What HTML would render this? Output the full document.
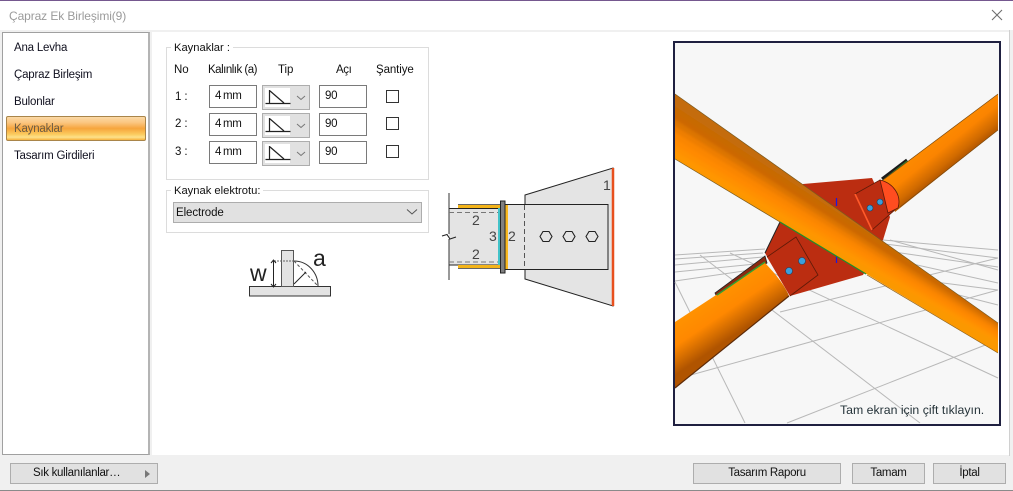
<!DOCTYPE html>
<html><head><meta charset="utf-8">
<style>
html,body{margin:0;padding:0;width:1013px;height:491px;overflow:hidden;background:#f0f0f0;font-family:"Liberation Sans",sans-serif;font-size:11.5px;color:#111}
div,span{position:absolute;box-sizing:border-box}
.t{white-space:nowrap;line-height:14px;letter-spacing:-.1px}
.box{background:#fff;border:1px solid #7a7a7a;height:23px;width:48px;padding:4px 0 0 5px;line-height:13px;font-size:11.5px;word-spacing:-1px;letter-spacing:-.3px}
.combo{background:#e1e1e1;border:1px solid #adadad;width:48px;height:25px}
.chk{width:13px;height:13px;background:#fff;border:1px solid #333}
.btn{background:#e1e1e1;border:1px solid #adadad;height:21px;text-align:center;line-height:19px;font-size:11.5px;letter-spacing:-.3px;color:#111}
.grp{border:1px solid #dcdcdc}
.leg{background:#fff;padding:0 3px;line-height:14px;white-space:nowrap;font-size:11.2px}
.li{left:14px;font-size:11.5px;line-height:14px;white-space:nowrap;color:#10101f;letter-spacing:-.2px}
</style></head><body>
<div style="left:0;top:0;width:1013px;height:30px;background:#fff"></div>
<div style="left:0;top:0;width:1013px;height:1px;background:#75588f"></div>
<div class="t" style="left:9px;top:9px;color:#9b9b9b;font-size:12px">Çapraz Ek Birleşimi(9)</div>
<svg style="position:absolute;left:990px;top:8px" width="14" height="14"><path d="M2 2L12 12M12 2L2 12" stroke="#6f6f6f" stroke-width="1.1" fill="none"/></svg>

<div style="left:152px;top:32px;width:857px;height:423px;background:#fff"></div>
<div style="left:1009px;top:30px;width:1px;height:426px;background:#d0d0d0"></div>
<div style="left:2px;top:32px;width:148px;height:423px;background:#fff;border:1px solid #a0a0a0;border-right:2px solid #b4b4b4"></div>

<div class="li" style="top:41px">Ana Levha</div>
<div class="li" style="top:68px">Çapraz Birleşim</div>
<div class="li" style="top:95px">Bulonlar</div>
<div style="left:6px;top:116px;width:140px;height:25px;border:1px solid #a9854a;border-radius:2px;background:linear-gradient(#fbd9a6 0%,#fbc57f 25%,#f6a53d 50%,#fbcb5e 75%,#fde18a 88%,#f7b13c 100%)"></div>
<div class="li" style="top:122px;color:#6b5a42">Kaynaklar</div>
<div class="li" style="top:149px">Tasarım Girdileri</div>

<div class="grp" style="left:166px;top:47px;width:263px;height:133px"></div>
<div class="leg" style="left:171px;top:41px">Kaynaklar :</div>
<div class="t" style="left:174px;top:63px">No</div>
<div class="t" style="left:208px;top:63px;letter-spacing:-.5px">Kalınlık (a)</div>
<div class="t" style="left:278px;top:63px">Tip</div>
<div class="t" style="left:336px;top:63px;letter-spacing:-.4px">Açı</div>
<div class="t" style="left:376px;top:63px">Şantiye</div>

<div class="t" style="left:175px;top:90px">1 :</div>
<div class="t" style="left:175px;top:117px">2 :</div>
<div class="t" style="left:175px;top:145px">3 :</div>

<div class="box" style="left:209px;top:85px">4 mm</div>
<div class="box" style="left:209px;top:113px">4 mm</div>
<div class="box" style="left:209px;top:141px">4 mm</div>

<div class="combo" style="left:262px;top:85px"></div>
<div class="combo" style="left:262px;top:113px"></div>
<div class="combo" style="left:262px;top:141px"></div>
<svg style="position:absolute;left:262px;top:85px" width="48" height="82">
<g><rect x="3" y="3" width="25" height="19" fill="#fff"/><path d="M3.500 18.500H28.500M7.500 5V18M7.500 5.500L22 18" stroke="#222" stroke-width="1.2" fill="none"/><path d="M35 11l4 3.500l4-3.500" stroke="#777" fill="none"/></g>
<g transform="translate(0,28)"><rect x="3" y="3" width="25" height="19" fill="#fff"/><path d="M3.500 18.500H28.500M7.500 5V18M7.500 5.500L22 18" stroke="#222" stroke-width="1.2" fill="none"/><path d="M35 11l4 3.500l4-3.500" stroke="#777" fill="none"/></g>
<g transform="translate(0,56)"><rect x="3" y="3" width="25" height="19" fill="#fff"/><path d="M3.500 18.500H28.500M7.500 5V18M7.500 5.500L22 18" stroke="#222" stroke-width="1.2" fill="none"/><path d="M35 11l4 3.500l4-3.500" stroke="#777" fill="none"/></g>
</svg>

<div class="box" style="left:319px;top:85px">90</div>
<div class="box" style="left:319px;top:113px">90</div>
<div class="box" style="left:319px;top:141px">90</div>
<div class="chk" style="left:386px;top:90px"></div>
<div class="chk" style="left:386px;top:117px"></div>
<div class="chk" style="left:386px;top:145px"></div>

<div class="grp" style="left:166px;top:190px;width:263px;height:43px"></div>
<div class="leg" style="left:171px;top:184px">Kaynak elektrotu:</div>
<div style="left:173px;top:202px;width:249px;height:21px;background:#e1e1e1;border:1px solid #adadad"></div>
<div class="t" style="left:176px;top:206px;font-size:11.5px">Electrode</div>
<svg style="position:absolute;left:405px;top:207px" width="14" height="10"><path d="M2 2.500l5 4.500l5-4.500" stroke="#555" fill="none"/></svg>

<svg style="position:absolute;left:240px;top:240px" width="100" height="60">
<rect x="9.500" y="46.500" width="81" height="9.500" fill="#e3e3e3" stroke="#333"/>
<rect x="41.500" y="10.500" width="12" height="36" fill="#e3e3e3" stroke="#555"/>
<path d="M54 21C68 21 78 33 78 46" fill="none" stroke="#333"/>
<path d="M54 21L78 46" fill="none" stroke="#555" stroke-dasharray="3 2"/>
<path d="M34 21H54" stroke="#666" stroke-dasharray="2 1" fill="none"/>
<path d="M33.500 21V46" stroke="#222"/>
<path d="M54 44L66 32" stroke="#222"/>
<path d="M31 23l2.500-3l2.500 3M31 44l2.500 3l2.500-3" stroke="#222" fill="none"/>
<text x="10" y="41" font-family="Liberation Sans,sans-serif" font-size="23" fill="#222">w</text>
<text x="73" y="26" font-family="Liberation Sans,sans-serif" font-size="23" fill="#222">a</text>
</svg>

<svg style="position:absolute;left:435px;top:155px" width="190" height="165" font-family="Liberation Sans,sans-serif" font-size="14" fill="#444">
<path d="M90 40L178 13V151L90 124Z" fill="#e4e4e4" stroke="#222" stroke-width="1"/>
<rect x="71" y="49.500" width="102" height="65" fill="#e4e4e4" stroke="#222"/>
<rect x="14" y="53" width="51" height="57" fill="#e4e4e4"/>
<path d="M14 53.500H65M14 110H65" stroke="#222"/>
<path d="M14 38V79M14 84V125" fill="none" stroke="#333"/>
<path d="M7 81L12 79.500L15 84L21 82" fill="none" stroke="#222" stroke-width="1.100"/>
<rect x="23" y="49.500" width="42" height="3.500" fill="#f4b41a"/><rect x="23" y="110" width="42" height="3.500" fill="#f4b41a"/>
<path d="M23 49.500H65M23 113.500H65" stroke="#666"/>
<path d="M14 57.500H63M14 107H63" stroke="#777" stroke-dasharray="5 3" fill="none"/>
<rect x="63" y="53" width="2.500" height="57" fill="#42c2c8"/>
<rect x="65.500" y="46" width="4.500" height="72" fill="#808080" stroke="#222"/>
<rect x="70.500" y="50" width="2.500" height="64" fill="#f8b820"/>
<path d="M89.500 50V114" stroke="#555" stroke-dasharray="5 3"/>
<path d="M178 13V151" stroke="#e8501e" stroke-width="2.500"/>
<g fill="none" stroke="#222" stroke-width="1.100">
<path d="M105 81.500l3-5h6l3 5l-3 5h-6z"/><path d="M128 81.500l3-5h6l3 5l-3 5h-6z"/><path d="M151 81.500l3-5h6l3 5l-3 5h-6z"/>
</g>
<text x="168" y="35">1</text><text x="37" y="70">2</text><text x="37" y="104">2</text><text x="54" y="86">3</text><text x="73" y="86">2</text>
</svg>

<svg style="position:absolute;left:673px;top:41px" width="328" height="385" viewBox="673 41 328 385">
<defs>
<linearGradient id="g1" gradientUnits="userSpaceOnUse" x1="930" y1="130" x2="958" y2="165"><stop offset="0" stop-color="#ff8f00"/><stop offset=".5" stop-color="#fb8400"/><stop offset=".8" stop-color="#d06a00"/><stop offset="1" stop-color="#a85000"/></linearGradient>
<linearGradient id="g2" gradientUnits="userSpaceOnUse" x1="715" y1="290" x2="742" y2="330"><stop offset="0" stop-color="#ff9400"/><stop offset=".5" stop-color="#ff8800"/><stop offset=".8" stop-color="#d06a00"/><stop offset="1" stop-color="#b05400"/></linearGradient>
<clipPath id="c1"><path d="M675 94L998 323V353L675 159Z"/></clipPath>
<filter id="b1" x="-5%" y="-5%" width="110%" height="110%"><feGaussianBlur stdDeviation="1.200"/></filter>
</defs>
<rect x="674" y="42" width="326" height="383" fill="#f7f7f7" stroke="#1f2040" stroke-width="2"/>
<g stroke="#b8b8b8" stroke-width="1" fill="none">
<path d="M675 255L765 249M675 259L763 253M675 265L763 257M675 272L765 263M675 281L765 268"/>
<path d="M883 240L998 250M885 244L998 258M880 250L998 267M872 255L998 283M880 275L998 290"/>
<path d="M675 282L745 423"/>
<path d="M700 255L920 423"/>
<path d="M730 253L998 378"/>
<path d="M787 423L998 340"/>
<path d="M680 378L998 290"/>
<path d="M780 312L998 258"/>
<path d="M860 270L998 305"/>
<path d="M890 240L998 270"/>
</g>
<path d="M803 184L872 178L890 217L883 240L863 275L790 296L765 253L780 222Z" fill="#bb2d11"/>
<path d="M780 222L765 253" stroke="#222" stroke-width="1"/>
<path d="M767 257L796 237L818 275L790 296" fill="#bb2d11" stroke="#5d1a08" stroke-width=".8"/>
<path d="M855 194L880 180L897 208L872 230Z" fill="#bb2d11" stroke="#5d1a08" stroke-width=".8"/>
<path d="M855 194L872 230" stroke="#ff5a2a" stroke-width="1.600"/>
<path d="M765 256L715 293L717 297L767 263Z" fill="#8a2a10" stroke="#222" stroke-width=".8"/>
<path d="M882 179L907 160" stroke="#1b1b1b" stroke-width="3"/>
<path d="M882 181L907 161" stroke="#2d8a2d" stroke-width="1"/>
<path d="M883 180L998 94V130L895 212Z" fill="url(#g1)"/>
<path d="M883 180L998 94M998 130L900 207" stroke="#7a4a10" stroke-width=".7"/>
<path d="M880 180C893 183 902 195 898 208L888 213Z" fill="#ff4d20" stroke="#5d1a08" stroke-width=".8"/>
<path d="M675 322L765 263C772 270 785 285 789 296L675 388Z" fill="url(#g2)"/>
<path d="M675 388L789 296" stroke="#5c2a08" stroke-width="1.200"/>
<path d="M717 295L765 262" stroke="#32a032" stroke-width="1.500"/>
<circle cx="870" cy="208" r="3" fill="#3a9fdc" stroke="#204060" stroke-width=".6"/><circle cx="880" cy="202" r="3" fill="#3a9fdc" stroke="#204060" stroke-width=".6"/>
<circle cx="789" cy="271" r="3.500" fill="#3a9fdc" stroke="#204060" stroke-width=".6"/><circle cx="802" cy="261" r="3.500" fill="#3a9fdc" stroke="#204060" stroke-width=".6"/>
<path d="M836.500 198V206M836.500 255V263M848 234.500H854" stroke="#1a1ae0" stroke-width="1.200"/>
<g clip-path="url(#c1)"><g filter="url(#b1)" stroke-width=".7">
<path d="M665 80L1010 320L1010 326L665 100.500Z" fill="#c46c08" stroke="#c46c08"/>
<path d="M665 100.500L1010 326L1010 329L665 107Z" fill="#c86a02" stroke="#c86a02"/>
<path d="M665 107L1010 329L1010 332L665 113.500Z" fill="#cc6800" stroke="#cc6800"/>
<path d="M665 113.500L1010 332L1010 335L665 120Z" fill="#dc7400" stroke="#dc7400"/>
<path d="M665 120L1010 335L1010 338L665 126.500Z" fill="#ee7e00" stroke="#ee7e00"/>
<path d="M665 126.500L1010 338L1010 341L665 133Z" fill="#fa8600" stroke="#fa8600"/>
<path d="M665 133L1010 341L1010 344L665 139.500Z" fill="#ff8a00" stroke="#ff8a00"/>
<path d="M665 139.500L1010 344L1010 347L665 146Z" fill="#ff9000" stroke="#ff9000"/>
<path d="M665 146L1010 347L1010 350L665 152.500Z" fill="#ff9600" stroke="#ff9600"/>
<path d="M665 152.500L1010 350L1010 365L665 170Z" fill="#fb9800" stroke="#fb9800"/>
</g></g>
<path d="M675 94L998 323M675 159L780 222" stroke="#7a5a20" stroke-width=".7" fill="none"/>
<path d="M780 222L866 274" stroke="#1f8f2a" stroke-width="1.200"/>
<path d="M867 275L998 353" stroke="#8a5a10" stroke-width=".7"/>
<text x="840" y="414" font-family="Liberation Sans,sans-serif" font-size="12.300" fill="#26343a">Tam ekran için çift tıklayın.</text>
</svg>

<div class="btn" style="left:10px;top:463px;width:148px;text-align:left;padding-left:22px">Sık kullanılanlar…</div>
<svg style="position:absolute;left:144px;top:469px" width="8" height="10"><path d="M1 1L6 5L1 9Z" fill="#777"/></svg>
<div class="btn" style="left:693px;top:463px;width:148px">Tasarım Raporu</div>
<div class="btn" style="left:852px;top:463px;width:73px">Tamam</div>
<div class="btn" style="left:933px;top:463px;width:73px">İptal</div>
<div style="left:0;top:490px;width:1013px;height:1px;background:#8a8a8a"></div>
</body></html>
